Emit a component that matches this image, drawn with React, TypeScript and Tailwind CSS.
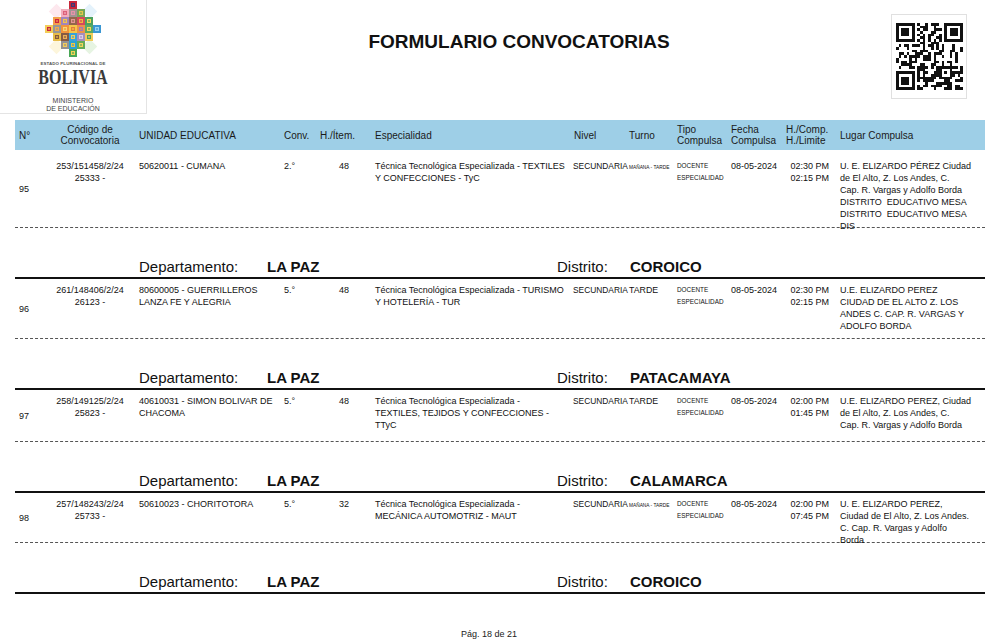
// =============================================================================
// Formulario Convocatorias — printed report page
// =============================================================================

type Row = {
    n: string;
    code: string[];
    unidad: string[];
    conv: string;
    item: string;
    esp: string[];
    turno: "doble" | "tarde";
    horas: string[];
    lugar: string[];
    box: string;
    pad: string;
    dep: string;
    dist: string;
};

const rows: Row[] = [
    {
        n: "95",
        code: ["253/151458/2/24", "25333 -"],
        unidad: ["50620011 - CUMANA"],
        conv: "2.°",
        item: "48",
        esp: ["Técnica Tecnológica Especializada - TEXTILES", "Y CONFECCIONES - TyC"],
        turno: "doble",
        horas: ["02:30 PM", "02:15 PM"],
        lugar: [
            "U. E. ELIZARDO PÉREZ Ciudad",
            "de El Alto, Z. Los Andes, C.",
            "Cap. R. Vargas y Adolfo Borda",
            "DISTRITO  EDUCATIVO MESA",
            "DISTRITO  EDUCATIVO MESA",
            "DIS",
        ],
        box: "h-[78px]",
        pad: "pt-[10px]",
        dep: "LA PAZ",
        dist: "COROICO",
    },
    {
        n: "96",
        code: ["261/148406/2/24", "26123 -"],
        unidad: ["80600005 - GUERRILLEROS", "LANZA FE Y ALEGRIA"],
        conv: "5.°",
        item: "48",
        esp: ["Técnica Tecnológica Especializada - TURISMO", "Y HOTELERÍA - TUR"],
        turno: "tarde",
        horas: ["02:30 PM", "02:15 PM"],
        lugar: ["U.E. ELIZARDO PEREZ", "CIUDAD DE EL ALTO Z. LOS", "ANDES C. CAP. R. VARGAS Y", "ADOLFO BORDA"],
        box: "h-[60px]",
        pad: "pt-[5px]",
        dep: "LA PAZ",
        dist: "PATACAMAYA",
    },
    {
        n: "97",
        code: ["258/149125/2/24", "25823 -"],
        unidad: ["40610031 - SIMON BOLIVAR DE", "CHACOMA"],
        conv: "5.°",
        item: "48",
        esp: ["Técnica Tecnológica Especializada -", "TEXTILES, TEJIDOS Y CONFECCIONES -", "TTyC"],
        turno: "tarde",
        horas: ["02:00 PM", "01:45 PM"],
        lugar: ["U.E. ELIZARDO PEREZ, Ciudad", "de El Alto, Z. Los Andes, C.", "Cap. R. Vargas y Adolfo Borda"],
        box: "h-[52px]",
        pad: "pt-[5px]",
        dep: "LA PAZ",
        dist: "CALAMARCA",
    },
    {
        n: "98",
        code: ["257/148243/2/24", "25733 -"],
        unidad: ["50610023 - CHORITOTORA"],
        conv: "5.°",
        item: "32",
        esp: ["Técnica Tecnológica Especializada -", "MECÁNICA AUTOMOTRIZ - MAUT"],
        turno: "doble",
        horas: ["02:00 PM", "07:45 PM"],
        lugar: ["U. E. ELIZARDO PEREZ,", "Ciudad de El Alto, Z. Los Andes.", "C. Cap. R. Vargas y Adolfo", "Borda"],
        box: "h-[50px]",
        pad: "pt-[5px]",
        dep: "LA PAZ",
        dist: "COROICO",
    },
];

function Lines({ lines }: { lines: string[] }) {
    return (
        <>
            {lines.map((l, i) => (
                <div key={i} className="whitespace-pre">
                    {l}
                </div>
            ))}
        </>
    );
}

// ---- logo mosaic ------------------------------------------------------------
const mosaic: [number, number, string, string][] = [
    [3, 0, "#c4162a", "#2b2b6b"],
    [2, 1, "#f2a7b8", "#d9546f"],
    [3, 1, "#9c8c8c", "#e58aa2"],
    [4, 1, "#6ba04a", "#e3c23a"],
    [1, 2, "#f39a3c", "#c8102e"],
    [2, 2, "#9a7bb5", "#f3c13a"],
    [3, 2, "#8c5a3c", "#e38c8c"],
    [4, 2, "#d23a4e", "#f0b030"],
    [5, 2, "#3d9a52", "#f3d24c"],
    [0, 3, "#f2c94c", "#c8102e"],
    [1, 3, "#8f8f8f", "#f1a33c"],
    [2, 3, "#f08b2c", "#f6d36a"],
    [3, 3, "#f5c23c", "#e3742c"],
    [4, 3, "#e98a3b", "#9b6fb0"],
    [5, 3, "#4aa35a", "#f6d24c"],
    [6, 3, "#2a8fd0", "#8fd0ef"],
    [1, 4, "#e6b73a", "#7b4a2c"],
    [2, 4, "#7a4d35", "#e9a74a"],
    [3, 4, "#2a9bd6", "#f2c94c"],
    [4, 4, "#9d86b8", "#d8c8e8"],
    [5, 4, "#f1c84a", "#3d9a52"],
    [2, 5, "#8a8a8a", "#f2c94c"],
    [3, 5, "#1b9ad2", "#f0c030"],
    [4, 5, "#5aa54c", "#f3d24c"],
    [3, 6, "#3aa048", "#f2d048"],
];

function Escudo() {
    return (
        <svg width="58" height="58" viewBox="0 0 58 58">
            <rect x="7" y="6" width="11" height="11" fill="#fde8ee" transform="rotate(45 12.5 11.5)" />
            <rect x="40" y="6" width="11" height="11" fill="#e4f2fb" transform="rotate(45 45.5 11.5)" />
            <rect x="7" y="41" width="11" height="11" fill="#fdf6dc" transform="rotate(45 12.5 46.5)" />
            <rect x="40" y="41" width="11" height="11" fill="#e6f4e2" transform="rotate(45 45.5 46.5)" />
            {mosaic.map(([c, r, a, b], i) => (
                <g key={i} opacity="0.92">
                    <rect x={1 + c * 8} y={1 + r * 8} width="8" height="8" fill={a} />
                    <rect x={3 + c * 8} y={3 + r * 8} width="4" height="4" fill={b} />
                    <rect x={4.2 + c * 8} y={4.2 + r * 8} width="1.6" height="1.6" fill={a} />
                </g>
            ))}
        </svg>
    );
}

// ---- QR ---------------------------------------------------------------------
function qrMatrix(): boolean[][] {
    const n = 25;
    let seed = 91;
    const rnd = () => {
        seed = (seed * 1103515245 + 12345) & 0x7fffffff;
        return seed / 0x7fffffff;
    };
    const m: boolean[][] = [];
    for (let y = 0; y < n; y++) {
        m.push([]);
        for (let x = 0; x < n; x++) m[y].push(rnd() > 0.52);
    }
    const finder = (ox: number, oy: number) => {
        for (let y = -1; y <= 7; y++)
            for (let x = -1; x <= 7; x++) {
                const yy = oy + y;
                const xx = ox + x;
                if (yy < 0 || xx < 0 || yy >= n || xx >= n) continue;
                const ring = Math.max(Math.abs(x - 3), Math.abs(y - 3));
                m[yy][xx] = ring === 3 || ring <= 1;
            }
    };
    finder(0, 0);
    finder(18, 0);
    finder(0, 18);
    for (let i = 8; i < 17; i++) {
        m[6][i] = i % 2 === 0;
        m[i][6] = i % 2 === 0;
    }
    for (let y = -2; y <= 2; y++)
        for (let x = -2; x <= 2; x++) {
            const ring = Math.max(Math.abs(x), Math.abs(y));
            m[18 + y][18 + x] = ring !== 1;
        }
    return m;
}

function QR() {
    const m = qrMatrix();
    return (
        <svg width="67" height="67" viewBox="0 0 25 25" shapeRendering="crispEdges">
            {m.flatMap((row, y) =>
                row.map((on, x) => (on ? <rect key={`${x}-${y}`} x={x} y={y} width="1" height="1" fill="#111" /> : null)),
            )}
        </svg>
    );
}

// ---- table parts --------------------------------------------------------------
function HeaderBar() {
    return (
        <div className="mx-[15px] flex h-[30px] items-center whitespace-nowrap bg-[#9ecfe7] text-[10px] leading-[11px] text-[#1a1a1a]">
            <div className="w-[35px] pl-[4px]">N°</div>
            <div className="w-[80px] text-center">
                Código de
                <br />
                Convocatoria
            </div>
            <div className="w-[150px] pl-[9px]">UNIDAD EDUCATIVA</div>
            <div className="w-[36px] pl-[4px]">Conv.</div>
            <div className="w-[36px] pl-[4px]">H./Ítem.</div>
            <div className="w-[220px] pl-[23px]">Especialidad</div>
            <div className="w-[55px] pl-[2px]">Nivel</div>
            <div className="w-[48px] pl-[2px]">Turno</div>
            <div className="w-[54px] pl-[2px]">
                Tipo
                <br />
                Compulsa
            </div>
            <div className="w-[54px] pl-[2px]">
                Fecha
                <br />
                Compulsa
            </div>
            <div className="w-[54px] pl-[3px]">
                H./Comp.
                <br />
                H./Limite
            </div>
            <div className="w-[136px] pl-[3px]">Lugar Compulsa</div>
        </div>
    );
}

function DataRow({ r }: { r: Row }) {
    return (
        <div className={`mx-[15px] flex border-b border-dashed border-[#555] text-[9px] leading-[12px] text-[#111] ${r.box}`}>
            <div className="w-[35px] self-center pl-[4px]">{r.n}</div>
            <div className={`flex items-start ${r.pad}`}>
                <div className="w-[80px] text-center">
                    <Lines lines={r.code} />
                </div>
                <div className="w-[150px] pl-[9px]">
                    <Lines lines={r.unidad} />
                </div>
                <div className="w-[36px] pl-[4px]">{r.conv}</div>
                <div className="w-[36px] pr-[3px] text-right">{r.item}</div>
                <div className="w-[220px] pl-[23px]">
                    <Lines lines={r.esp} />
                </div>
                <div className="w-[55px] pl-[1px] text-[8.4px]">SECUNDARIA</div>
                <div className="w-[48px] pl-[2px]">
                    {r.turno === "doble" ? (
                        <span className="text-[4.8px]">MAÑANA - TARDE</span>
                    ) : (
                        <span className="text-[8.8px]">TARDE</span>
                    )}
                </div>
                <div className="w-[54px] pl-[2px] text-[6.4px]">
                    <div>DOCENTE</div>
                    <div>ESPECIALIDAD</div>
                </div>
                <div className="w-[54px] pl-[2px]">08-05-2024</div>
                <div className="w-[54px] pr-[8px] text-right">
                    <Lines lines={r.horas} />
                </div>
                <div className="w-[136px] pl-[3px]">
                    <Lines lines={r.lugar} />
                </div>
            </div>
        </div>
    );
}

function Ubicacion({ dep, dist }: { dep: string; dist: string }) {
    return (
        <div className="mx-[15px] flex border-b-2 border-[#111] pb-[3px] pt-[31px] text-[15px] leading-[15px] text-[#111]">
            <div className="w-[252px] pl-[124px]">Departamento:</div>
            <div className="w-[290px] font-bold">{dep}</div>
            <div className="w-[73px]">Distrito:</div>
            <div className="font-bold">{dist}</div>
        </div>
    );
}

export default function App() {
    return (
        <div className="h-[643px] w-[1000px] overflow-hidden bg-white font-['Liberation_Sans',Arial,sans-serif] text-[#111]">
            {/* Header */}
            <div className="flex h-[120px]">
                <div className="flex h-[114px] w-[147px] flex-col items-center border-b border-r border-[#e4e4e4]">
                    <Escudo />
                    <div className="mt-[3px] text-[4.4px] font-bold leading-[5px] tracking-[0.1px] text-[#555]">
                        ESTADO PLURINACIONAL DE
                    </div>
                    <div className="mt-[3px] h-[15px] scale-y-135 font-['Liberation_Serif',serif] text-[16px] font-bold leading-[15px] text-[#3a3a3a]">
                        BOLIVIA
                    </div>
                    <div className="mt-[13px] text-center text-[7px] leading-[8px] text-[#444]">
                        MINISTERIO
                        <br />
                        DE EDUCACIÓN
                    </div>
                </div>
                <div className="flex flex-1 justify-center pt-[32px]">
                    <h1 className="text-[19px] font-bold leading-[19px] text-[#111]">FORMULARIO CONVOCATORIAS</h1>
                </div>
                <div className="w-[109px] pt-[14px]">
                    <div className="flex h-[85px] w-[76px] items-center justify-center border border-[#e0e0e0]">
                        <QR />
                    </div>
                </div>
            </div>

            <HeaderBar />

            {rows.map((r) => (
                <div key={r.n}>
                    <DataRow r={r} />
                    <Ubicacion dep={r.dep} dist={r.dist} />
                </div>
            ))}

            <div className="mt-[34px] pr-[22px] text-center text-[9px] leading-[12px] text-[#222]">Pág. 18 de 21</div>
        </div>
    );
}
